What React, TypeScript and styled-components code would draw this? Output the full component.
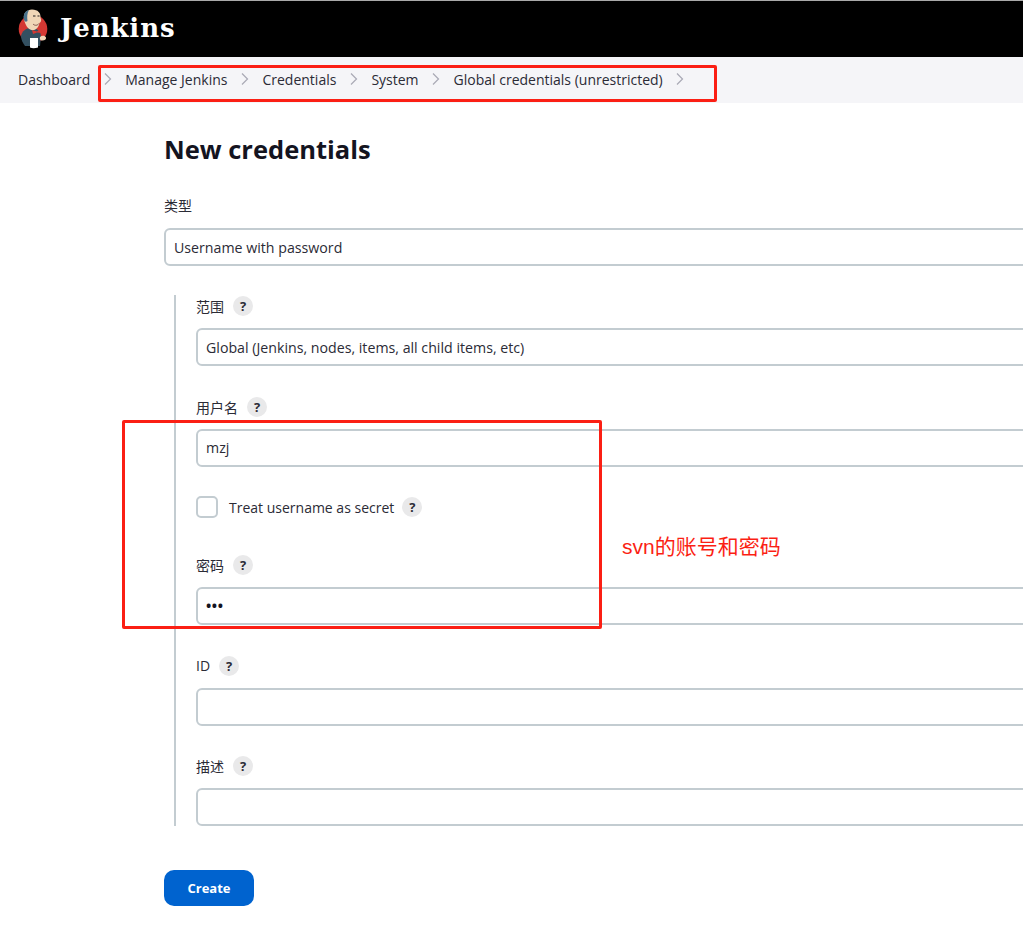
import { Fragment } from 'react';
import styled, { createGlobalStyle } from 'styled-components';

const GlobalStyle = createGlobalStyle`
  html, body {
    margin: 0;
    padding: 0;
    background: #ffffff;
    overflow: hidden;
  }
  body {
    font-family: 'Open Sans', 'Noto Sans CJK SC', sans-serif;
    font-size: 14px;
    color: #14141f;
  }
`;

const Page = styled.div`
  position: relative;
  width: 1023px;
  height: 931px;
  overflow: hidden;
`;

const Header = styled.header`
  display: flex;
  align-items: center;
  gap: 10px;
  height: 56px;
  padding-left: 17px;
  background: #000000;
  border-top: 1px solid #a9a9a9;
`;

const Brand = styled.span`
  margin-top: -3px;
  font-family: 'DejaVu Serif', serif;
  font-weight: 700;
  font-size: 26px;
  letter-spacing: 0.9px;
  color: #ffffff;
`;

const Breadcrumbs = styled.nav`
  display: flex;
  align-items: center;
  gap: 13.5px;
  box-sizing: border-box;
  height: 46px;
  padding: 0 0 2px 18px;
  background: #f5f5f8;
`;

const Crumb = styled.span`
  font-size: 14px;
  color: #2b2b36;
  white-space: nowrap;
`;

const Content = styled.main`
  display: flex;
  flex-direction: column;
  padding: 25px 0 0 164px;
`;

const Title = styled.h1`
  margin: 0 0 24px;
  height: 42px;
  line-height: 42px;
  font-size: 25.5px;
  font-weight: 700;
  color: #14141f;
`;

const Field = styled.div<{ $gap?: number }>`
  display: flex;
  flex-direction: column;
  margin-bottom: ${(p) => p.$gap ?? 29.67}px;
  &:last-child {
    margin-bottom: 0;
  }
`;

const LabelRow = styled.div<{ $tall?: boolean }>`
  display: flex;
  align-items: center;
  gap: 9px;
  height: 22px;
  margin-bottom: ${(p) => (p.$tall ? 12 : 11)}px;
  font-size: 14px;
  color: #2b2b36;
`;

const Help = styled.span`
  display: inline-flex;
  align-items: center;
  justify-content: center;
  flex: none;
  width: 20px;
  height: 20px;
  border-radius: 50%;
  background: #e9e9ea;
  font-size: 13px;
  font-weight: 700;
  color: #2b2b36;
`;

const InputBox = styled.div`
  display: flex;
  align-items: center;
  box-sizing: border-box;
  width: 1100px;
  height: 38px;
  padding: 0 8px;
  border: 2px solid #c3ccd1;
  border-radius: 6px;
  background: #ffffff;
  font-size: 14.2px;
  color: #2b2b36;
`;

const Dots = styled.span`
  font-size: 14px;
  font-weight: 700;
  letter-spacing: 0.6px;
  color: #14141f;
`;

const Nested = styled.section`
  display: flex;
  flex-direction: column;
  margin: 29px 0 44px 10px;
  padding-left: 20px;
  border-left: 2px solid #c3ccd1;
`;

const CheckRow = styled.div`
  display: flex;
  align-items: center;
  gap: 11px;
  height: 22px;
  margin-bottom: 35.67px;
  color: #2b2b36;
`;

const CheckBox = styled.span`
  box-sizing: border-box;
  width: 22px;
  height: 22px;
  border: 2px solid #c3ccd1;
  border-radius: 5px;
`;

const CheckLabel = styled.span`
  margin-right: -3px;
  font-size: 14px;
`;

const ButtonRow = styled.div`
  display: flex;
`;

const CreateButton = styled.button`
  width: 90px;
  height: 36px;
  padding: 0;
  border: none;
  border-radius: 10px;
  background: #0063cf;
  color: #ffffff;
  font-family: inherit;
  font-size: 13px;
  font-weight: 700;
`;

const RedFrame = styled.div<{ $x: number; $y: number; $w: number; $h: number }>`
  position: absolute;
  box-sizing: border-box;
  left: ${(p) => p.$x}px;
  top: ${(p) => p.$y}px;
  width: ${(p) => p.$w}px;
  height: ${(p) => p.$h}px;
  border: 3px solid #fb1f14;
  border-radius: 2px;
`;

const RedNote = styled.div`
  position: absolute;
  left: 622px;
  top: 532px;
  font-family: 'Liberation Sans', 'Noto Sans CJK SC', sans-serif;
  font-size: 21px;
  line-height: 30px;
  color: #fb1f14;
`;

const Chevron = () => (
  <svg width="8" height="14" viewBox="0 0 8 14" fill="none" stroke="#a9a9b5" strokeWidth="1.2">
    <path d="M1 1.5 L6.5 7 L1 12.5" />
  </svg>
);

// butler logo, viewBox is in page pixels so it lines up with the reference
const Logo = () => (
  <svg width="33" height="42" viewBox="17 8 33 42">
    <circle cx="33" cy="29" r="14.3" fill="#d33833" />
    <path d="M21 36 C22 31 26 28 31 28 C37 28 41 31 41 37 L40 46 L25 46 C23 43 21 40 21 36 Z" fill="#335061" />
    <path d="M24 19 C23 13 27 9.5 32 9.5 C38 9.5 41 13 40.5 18 C41.5 19 41.5 22 39.5 23 C38.5 28 35 31 31.5 30 C28 29 25 25 24 19 Z" fill="#f0d6b7" />
    <path d="M24 20 C23 14 25 11 29 10 C27 13 27 17 27.5 21 C26 22 25 22 24 20 Z" fill="#49728b" />
    <path d="M33 16 h2.5 M37.5 16 h2" stroke="#231f20" strokeWidth="1" />
    <path d="M33 24 C35 26 37.5 25.5 39 23.5" stroke="#81514b" strokeWidth="1" fill="none" />
    <path d="M32 30 L37 31.5 L41 28.5 L41.5 33 L37 32.5 L33 34 Z" fill="#d33833" />
    <path d="M30 38 L38 38 L38 47.5 C35 48.5 32 48.5 30 47.5 Z" fill="#ffffff" />
    <path d="M40 37 C42 35 45 35.5 46 37.5 C46.5 39.5 44 41 41.5 40.5 C40 40 39.5 38.5 40 37 Z" fill="#f0d6b7" />
  </svg>
);

const App = () => {
  const crumbs = ['Dashboard', 'Manage Jenkins', 'Credentials', 'System', 'Global credentials (unrestricted)'];
  return (
    <Page>
      <GlobalStyle />
      <Header>
        <Logo />
        <Brand>Jenkins</Brand>
      </Header>
      <Breadcrumbs>
        {crumbs.map((c) => (
          <Fragment key={c}>
            <Crumb>{c}</Crumb>
            <Chevron />
          </Fragment>
        ))}
      </Breadcrumbs>
      <Content>
        <Title>New credentials</Title>
        <Field $gap={0}>
          <LabelRow $tall>类型</LabelRow>
          <InputBox>Username with password</InputBox>
        </Field>
        <Nested>
          <Field>
            <LabelRow>
              范围 <Help>?</Help>
            </LabelRow>
            <InputBox>Global (Jenkins, nodes, items, all child items, etc)</InputBox>
          </Field>
          <Field>
            <LabelRow>
              用户名 <Help>?</Help>
            </LabelRow>
            <InputBox>mzj</InputBox>
          </Field>
          <CheckRow>
            <CheckBox />
            <CheckLabel>Treat username as secret</CheckLabel>
            <Help>?</Help>
          </CheckRow>
          <Field>
            <LabelRow>
              密码 <Help>?</Help>
            </LabelRow>
            <InputBox>
              <Dots>•••</Dots>
            </InputBox>
          </Field>
          <Field>
            <LabelRow>
              ID <Help>?</Help>
            </LabelRow>
            <InputBox />
          </Field>
          <Field>
            <LabelRow>
              描述 <Help>?</Help>
            </LabelRow>
            <InputBox />
          </Field>
        </Nested>
        <ButtonRow>
          <CreateButton>Create</CreateButton>
        </ButtonRow>
      </Content>
      <RedFrame $x={98} $y={65} $w={619} $h={37} />
      <RedFrame $x={122} $y={420} $w={480} $h={209} />
      <RedNote>svn的账号和密码</RedNote>
    </Page>
  );
};

export default App;
